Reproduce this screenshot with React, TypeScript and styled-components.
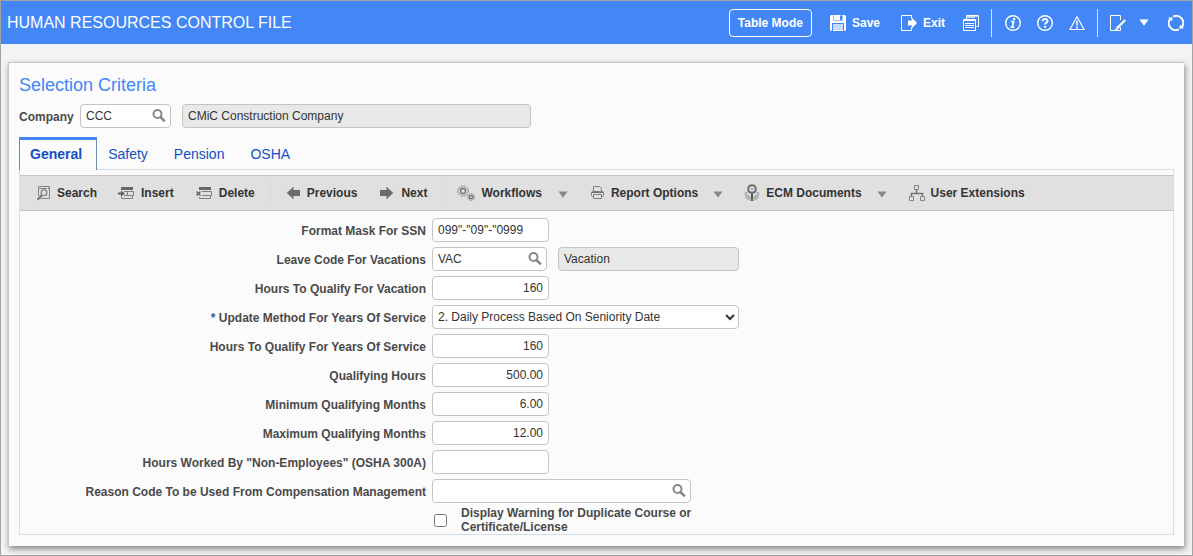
import React from "react";
import styled, { createGlobalStyle, css } from "styled-components";

const GlobalStyle = createGlobalStyle`
  *, *::before, *::after { box-sizing: border-box; }
  body { margin: 0; }
  body, button, input, select {
    font-family: "Liberation Sans", Arial, sans-serif;
    font-size: 12px;
  }
`;

const Page = styled.div`
  display: flex;
  flex-direction: column;
  min-height: 100vh;
  border: 1px solid #a3a3a3;
  background: #f1f3f5;
`;

const Header = styled.header`
  display: flex;
  align-items: center;
  justify-content: space-between;
  height: 43px;
  padding: 0 8px 0 6px;
  background: #4287f5;
  color: #fff;
`;

const PageTitle = styled.h1`
  margin: 0;
  font-size: 16px;
  font-weight: 400;
  line-height: 20px;
  white-space: nowrap;
`;

const HeaderActions = styled.div`
  display: flex;
  align-items: center;
`;

const OutlineButton = styled.button`
  height: 28px;
  padding: 0 8px;
  margin-right: 18px;
  border: 1px solid #fff;
  border-radius: 4px;
  background: transparent;
  color: #fff;
  font-weight: 700;
  white-space: nowrap;
`;

const HeaderButton = styled.button<{ $after?: number }>`
  display: flex;
  align-items: center;
  gap: 6px;
  height: 28px;
  padding: 0;
  margin-right: ${({ $after = 16 }) => $after}px;
  border: 0;
  background: transparent;
  color: #fff;
  font-weight: 700;
  svg { display: block; }
`;

const HeaderDivider = styled.span<{ $after: number }>`
  width: 1px;
  height: 28px;
  margin-right: ${({ $after }) => $after}px;
  background: #d5e3fb;
`;

const Panel = styled.main`
  margin: 18px 8px 9px 7px;
  padding: 10px 10px 11px;
  border: 1px solid #c6c8ca;
  border-width: 1px 0 0 1px;
  background: #fbfbfb;
  box-shadow: 1px 3px 6px rgba(0, 0, 0, 0.45);
`;

const SectionTitle = styled.h2`
  margin: 0 0 7px;
  color: #4287f5;
  font-size: 18px;
  font-weight: 400;
  line-height: 24px;
`;

const CriteriaRow = styled.div`
  display: flex;
  align-items: center;
`;

const labelText = css`
  color: #4a4a4a;
  font-weight: 700;
  line-height: 14px;
`;

const CriteriaLabel = styled.label`
  ${labelText}
  width: 61px;
  padding-top: 2px;
`;

const fieldBox = css`
  height: 24px;
  border: 1px solid #c4c4c4;
  border-radius: 4px;
  background: #fff;
  color: #333;
`;

const TextField = styled.input<{ $width: number; $numeric?: boolean }>`
  ${fieldBox}
  width: ${({ $width }) => $width}px;
  padding: 0 5px;
  text-align: ${({ $numeric }) => ($numeric ? "right" : "left")};
  &:read-only { background: #e8e8e8; }
`;

const LookupBox = styled.div<{ $width: number }>`
  ${fieldBox}
  display: flex;
  align-items: center;
  width: ${({ $width }) => $width}px;
  margin-right: 11px;
  padding: 0 3px 0 5px;
  input {
    flex: 1;
    min-width: 0;
    height: 22px;
    padding: 0;
    border: 0;
    outline: 0;
    background: transparent;
    color: inherit;
  }
  button {
    padding: 0;
    border: 0;
    background: transparent;
  }
  svg { display: block; }
`;

const SelectField = styled.select`
  ${fieldBox}
  width: 307px;
  padding: 0 1px;
`;

const Tabs = styled.div`
  display: flex;
  height: 33px;
  margin-top: 9px;
  box-shadow: inset 0 -1px #d3dee8;
`;

const Tab = styled.button<{ $active?: boolean }>`
  padding: 0 13px;
  border: 0;
  background: transparent;
  color: #1250c4;
  font-size: 14px;
  line-height: 16px;
  ${({ $active }) =>
    $active &&
    css`
      padding: 0 14px 3px 10px;
      margin-right: -2px;
      border: solid #6d8cab;
      border-width: 0 1px;
      border-top: 3px solid #4287f5;
      background: #fbfbfb;
      font-weight: 700;
    `}
`;

const TabPanel = styled.section`
  padding-top: 5px;
  border: 1px solid #d3dee8;
  border-top: 0;
`;

const Toolbar = styled.div`
  display: flex;
  align-items: center;
  height: 36px;
  padding-left: 16px;
  border: solid #c4c4c4;
  border-width: 1px 0;
  background: #e0e0e0;
`;

const ToolButton = styled.button<{ $after: number }>`
  display: flex;
  align-items: center;
  gap: 6px;
  padding: 0;
  margin-right: ${({ $after }) => $after}px;
  border: 0;
  background: transparent;
  color: #333;
  font-weight: 700;
  white-space: nowrap;
  svg { display: block; flex: none; }
`;

const MenuArrow = styled.button<{ $after: number }>`
  padding: 2px 0 0;
  margin-right: ${({ $after }) => $after}px;
  border: 0;
  background: transparent;
  svg { display: block; }
`;

const ToolDivider = styled.span`
  width: 1px;
  height: 28px;
  margin-right: 14px;
  background: #d3dce3;
`;

const Form = styled.form`
  display: flex;
  flex-direction: column;
  gap: 5px;
  padding-top: 7px;
`;

const FormRow = styled.div`
  display: flex;
  align-items: center;
`;

const FieldLabel = styled.label`
  ${labelText}
  width: 406px;
  margin-right: 6px;
  padding-top: 2px;
  text-align: right;
`;

const Required = styled.span`
  color: #2765b0;
`;

const CheckRow = styled.div`
  display: flex;
  align-items: center;
  padding-left: 414px;
  margin-top: -2px;
  input {
    width: 13px;
    height: 13px;
    margin: 0 14px 0 0;
  }
`;

const CheckLabel = styled.label`
  ${labelText}
  width: 250px;
`;

const SearchGlyph = () => (
  <svg width="16" height="16" viewBox="0 0 16 16" fill="none" stroke="#84888b">
    <circle cx="6.5" cy="6" r="4" strokeWidth="2" />
    <path d="M9.5 9l4.3 4.3" strokeWidth="2.6" />
  </svg>
);

const Triangle = ({ color }: { color: string }) => (
  <svg width="10" height="7" viewBox="0 0 10 7">
    <path d="M0.5 0.5h9L5 6.8z" fill={color} />
  </svg>
);

const SaveIcon = () => (
  <svg width="16" height="16" viewBox="0 0 16 16">
    <path d="M1 0h14l1 1v14l-1 1H1l-1-1V1z" fill="#fff" />
    <path d="M3 0h10v6H3z" fill="#9dc2fa" />
    <path d="M4 0h6v5H4z" fill="#fff" />
    <path d="M10 1h2v4h-2z" fill="#4287f5" />
    <path d="M2 8h12v8H2z" fill="#4287f5" />
    <path d="M3 9h10v7H3z" fill="#c6dbfc" />
    <path d="M3 15h10v1H3z" fill="#fff" />
  </svg>
);

const ExitIcon = () => (
  <svg width="16" height="16" viewBox="0 0 16 16">
    <path d="M10.5 4V.5H.5v15h10V12" fill="none" stroke="#fff" />
    <path d="M7 5.5h4V2.8L16 8l-5 5.2v-2.7H7z" fill="#fff" />
  </svg>
);

const WindowsIcon = () => (
  <svg width="16" height="16" viewBox="0 0 16 16" fill="none" stroke="#fff">
    <path d="M3.5 4V.5h12v11h-2" />
    <path d="M4 1.5h11M4 2.5h8" stroke="#c6dbfc" />
    <path d="M.5 4.5h12v11H.5z" />
    <path d="M1 5.5h11M2 8.5h9M2 10.5h9M2 12.5h9" />
  </svg>
);

const InfoIcon = () => (
  <svg width="16" height="16" viewBox="0 0 16 16">
    <circle cx="8" cy="8" r="7.3" fill="none" stroke="#fff" strokeWidth="1.4" />
    <circle cx="9.1" cy="4" r="1.3" fill="#fff" />
    <path d="M6 6.7h2.6L7.2 12M5.7 12.2h3.5" fill="none" stroke="#fff" strokeWidth="1.8" />
  </svg>
);

const HelpIcon = () => (
  <svg width="16" height="16" viewBox="0 0 16 16" fill="none" stroke="#fff">
    <circle cx="8" cy="8" r="7.3" strokeWidth="1.4" />
    <path d="M5.6 6.2C5.6 3.4 10.5 3.4 10.5 6c0 1.7-2.4 1.7-2.4 3.6" strokeWidth="2" />
    <path d="M8.1 10.8v2" strokeWidth="2.2" />
  </svg>
);

const WarningIcon = () => (
  <svg width="16" height="16" viewBox="0 0 16 16" fill="none" stroke="#fff">
    <path d="M8 1.8L.9 14.500h14.200z" strokeWidth="1.2" />
    <path d="M8 5.500v5M8 11.500v2" strokeWidth="1.5" />
  </svg>
);

const EditIcon = () => (
  <svg width="16" height="16" viewBox="0 0 16 16" fill="none" stroke="#fff">
    <path d="M10.5 5V.5H.5v15h10V12" />
    <path d="M15.2 5L7.5 12.7" strokeWidth="2.2" />
    <path d="M7.5 11l-2 4 3.8-2" strokeWidth="1" />
  </svg>
);

const RefreshIcon = () => (
  <svg width="16" height="16" viewBox="0 0 16 16" fill="none" stroke="#fff">
    <path d="M5.2 1.7A6.900 6.900 0 0 1 13.800 12M10.800 14.300A6.900 6.900 0 0 1 2.200 4" strokeWidth="1.9" />
    <path d="M0 2.800L4.600 2.200 4.200 6.200zM16 13.200l-4.600.6.4-4z" fill="#fff" stroke="none" />
  </svg>
);

const SearchRecordIcon = () => (
  <svg width="15" height="16" viewBox="0 0 15 16" fill="none" stroke="#858585">
    <path d="M2.500 11V1.500h11v12H4.500" />
    <path d="M2 3.500h9" />
    <path d="M12 3.500h1" stroke="#555" />
    <circle cx="8" cy="7.800" r="2.900" strokeWidth="1.300" />
    <path d="M5.800 10.300L1.500 14.800" strokeWidth="2" stroke="#707070" />
  </svg>
);

const InsertIcon = () => (
  <svg width="18" height="16" viewBox="0 0 18 16">
    <path d="M4 2h12v3H4z" fill="#666" />
    <path d="M7 6.500h9.500v4H7M10.500 6.500v4M4.500 10.500v3h11v-3" fill="none" stroke="#808080" />
    <path d="M1 7.500h3V5.500L8 8.500l-4 3v-2H1z" fill="#606060" />
  </svg>
);

const DeleteIcon = () => (
  <svg width="18" height="16" viewBox="0 0 18 16">
    <path d="M4 2h12v3H4z" fill="#666" />
    <path d="M7 6.500h9.500v4H7M4.500 12v1.500h11v-3" fill="none" stroke="#808080" />
    <path d="M1.500 6.500l4 4M5.500 6.500l-4 4" stroke="#606060" strokeWidth="1.500" />
  </svg>
);

const ArrowIcon = ({ right }: { right?: boolean }) => (
  <svg width="16" height="14" viewBox="0 0 16 14">
    <path
      d={right ? "M1 4h6.500V.800L14.300 7 7.500 13.200V10H1z" : "M15 4H8.500V.800L1.700 7l6.800 6.200V10H15z"}
      fill="#6c6c6c"
    />
  </svg>
);

const GearsIcon = () => (
  <svg width="18" height="16" viewBox="0 0 18 16" fill="none" stroke="#909090">
    <circle cx="6" cy="6" r="5.300" strokeDasharray="1.800 1" />
    <circle cx="6" cy="6" r="4.400" strokeWidth=".6" />
    <circle cx="6" cy="6" r="2.500" stroke="#707070" strokeWidth="1.300" />
    <circle cx="14" cy="12" r="3.300" strokeDasharray="1.300 .8" strokeWidth="1.300" />
    <circle cx="14" cy="12" r="1.600" stroke="#707070" strokeWidth="1.400" />
  </svg>
);

const PrinterIcon = () => (
  <svg width="15" height="16" viewBox="0 0 15 16" fill="none" stroke="#808080">
    <path d="M3.500 6.500v-5h6l2 2v3" />
    <rect x="1.500" y="6.500" width="12" height="5" rx="1" />
    <path d="M2 7.500h11" stroke="#707070" />
    <path d="M3.500 9.500h8v4h-8z" fill="#e0e0e0" />
  </svg>
);

const DocumentsIcon = () => (
  <svg width="16" height="18" viewBox="0 0 16 18" fill="none" stroke="#969696">
    <path d="M4 8L.8 9.500 8 14l7.200-4.500L12 8" />
    <path d="M1 11.500L8 15.500l7-4M1.500 13.500L6.500 16.500M14.500 13.500L9.500 16.500" />
    <circle cx="8" cy="5" r="3.800" fill="#e0e0e0" stroke="#6c6c6c" strokeWidth="2" />
    <circle cx="8" cy="5" r="1" fill="#888" stroke="none" />
    <path d="M8 9v8" stroke="#606060" strokeWidth="2" />
  </svg>
);

const TreeIcon = () => (
  <svg width="16" height="16" viewBox="0 0 16 16" fill="none" stroke="#858585">
    <path d="M5.500.500h4v4h-4zM.500 11.500h4v4h-4zM11.500 11.500h4v4h-4z" />
    <path d="M7.500 5v3M2.500 11V8.500h11V11" strokeWidth="1.500" stroke="#707070" />
  </svg>
);

interface LookupProps {
  id: string;
  label: string;
  width: number;
  value?: string;
}

const Lookup = ({ id, label, width, value }: LookupProps) => (
  <LookupBox $width={width}>
    <input id={id} type="text" defaultValue={value} />
    <button type="button" aria-label={`Look up ${label}`}>
      <SearchGlyph />
    </button>
  </LookupBox>
);

interface FieldRowProps {
  id: string;
  label: string;
  required?: boolean;
  children: React.ReactNode;
}

const FieldRow = ({ id, label, required, children }: FieldRowProps) => (
  <FormRow>
    <FieldLabel htmlFor={id}>
      {required && <Required>* </Required>}
      {label}
    </FieldLabel>
    {children}
  </FormRow>
);

const numericFields = [
  { id: "service-hours", label: "Hours To Qualify For Years Of Service", value: "160" },
  { id: "qualifying-hours", label: "Qualifying Hours", value: "500.00" },
  { id: "min-months", label: "Minimum Qualifying Months", value: "6.00" },
  { id: "max-months", label: "Maximum Qualifying Months", value: "12.00" },
  { id: "non-employee-hours", label: 'Hours Worked By "Non-Employees" (OSHA 300A)', value: "" },
];

export default function App() {
  return (
    <>
      <GlobalStyle />
      <Page>
        <Header>
          <PageTitle>HUMAN RESOURCES CONTROL FILE</PageTitle>
          <HeaderActions>
            <OutlineButton type="button">Table Mode</OutlineButton>
            <HeaderButton type="button" $after={21}><SaveIcon />Save</HeaderButton>
            <HeaderButton type="button" $after={18}><ExitIcon />Exit</HeaderButton>
            <HeaderButton type="button" $after={12} aria-label="Windows"><WindowsIcon /></HeaderButton>
            <HeaderDivider $after={13} />
            <HeaderButton type="button" aria-label="Information"><InfoIcon /></HeaderButton>
            <HeaderButton type="button" aria-label="Help"><HelpIcon /></HeaderButton>
            <HeaderButton type="button" $after={12} aria-label="Warnings"><WarningIcon /></HeaderButton>
            <HeaderDivider $after={12} />
            <HeaderButton type="button" $after={13} aria-label="Edit"><EditIcon /></HeaderButton>
            <HeaderButton type="button" $after={19} aria-label="Edit options"><Triangle color="#fff" /></HeaderButton>
            <HeaderButton type="button" $after={0} aria-label="Refresh"><RefreshIcon /></HeaderButton>
          </HeaderActions>
        </Header>

        <Panel>
          <SectionTitle>Selection Criteria</SectionTitle>
          <CriteriaRow>
            <CriteriaLabel htmlFor="company">Company</CriteriaLabel>
            <Lookup id="company" label="Company" width={91} value="CCC" />
            <TextField $width={349} readOnly aria-label="Company name" value="CMiC Construction Company" />
          </CriteriaRow>

          <Tabs role="tablist">
            <Tab type="button" role="tab" aria-selected $active>General</Tab>
            <Tab type="button" role="tab">Safety</Tab>
            <Tab type="button" role="tab">Pension</Tab>
            <Tab type="button" role="tab">OSHA</Tab>
          </Tabs>

          <TabPanel>
            <Toolbar role="toolbar">
              <ToolButton type="button" $after={20}><SearchRecordIcon />Search</ToolButton>
              <ToolButton type="button" $after={21}><InsertIcon />Insert</ToolButton>
              <ToolButton type="button" $after={15}><DeleteIcon />Delete</ToolButton>
              <ToolDivider />
              <ToolButton type="button" $after={22}><ArrowIcon />Previous</ToolButton>
              <ToolButton type="button" $after={15}><ArrowIcon right />Next</ToolButton>
              <ToolDivider />
              <ToolButton type="button" $after={16}><GearsIcon />Workflows</ToolButton>
              <MenuArrow type="button" $after={22} aria-label="Workflows menu"><Triangle color="#848a8f" /></MenuArrow>
              <ToolButton type="button" $after={15}><PrinterIcon />Report Options</ToolButton>
              <MenuArrow type="button" $after={21} aria-label="Report Options menu"><Triangle color="#848a8f" /></MenuArrow>
              <ToolButton type="button" $after={15}><DocumentsIcon />ECM Documents</ToolButton>
              <MenuArrow type="button" $after={22} aria-label="ECM Documents menu"><Triangle color="#848a8f" /></MenuArrow>
              <ToolButton type="button" $after={0}><TreeIcon />User Extensions</ToolButton>
            </Toolbar>

            <Form>
              <FieldRow id="ssn-mask" label="Format Mask For SSN">
                <TextField id="ssn-mask" $width={117} defaultValue={'099"-"09"-"0999'} />
              </FieldRow>
              <FieldRow id="leave-code" label="Leave Code For Vacations">
                <Lookup id="leave-code" label="Leave Code" width={115} value="VAC" />
                <TextField $width={181} readOnly aria-label="Leave code description" value="Vacation" />
              </FieldRow>
              <FieldRow id="vacation-hours" label="Hours To Qualify For Vacation">
                <TextField id="vacation-hours" $width={117} $numeric defaultValue="160" />
              </FieldRow>
              <FieldRow id="update-method" label="Update Method For Years Of Service" required>
                <SelectField id="update-method">
                  <option>2. Daily Process Based On Seniority Date</option>
                </SelectField>
              </FieldRow>
              {numericFields.map(({ id, label, value }) => (
                <FieldRow key={id} id={id} label={label}>
                  <TextField id={id} $width={117} $numeric defaultValue={value} />
                </FieldRow>
              ))}
              <FieldRow id="reason-code" label="Reason Code To be Used From Compensation Management">
                <Lookup id="reason-code" label="Reason Code" width={259} />
              </FieldRow>
              <CheckRow>
                <input id="duplicate-warning" type="checkbox" />
                <CheckLabel htmlFor="duplicate-warning">
                  Display Warning for Duplicate Course or Certificate/License
                </CheckLabel>
              </CheckRow>
            </Form>
          </TabPanel>
        </Panel>
      </Page>
    </>
  );
}
